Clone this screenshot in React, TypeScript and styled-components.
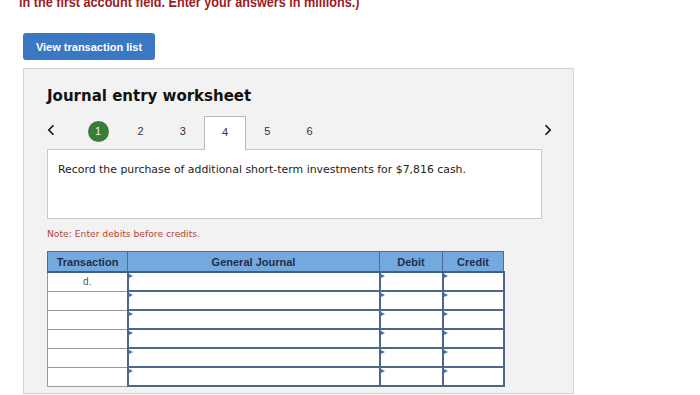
import styled, { createGlobalStyle } from "styled-components";

const GlobalStyle = createGlobalStyle`
  body {
    margin: 0;
    background: #ffffff;
    overflow: hidden;
  }
`;

const Page = styled.div`
  width: 700px;
  height: 395px;
  padding-left: 23px;
  box-sizing: border-box;
  overflow: hidden;
`;

const Instruction = styled.div`
  margin-top: -7px;
  margin-left: -4px;
  height: 17px;
  font-family: "Liberation Sans", Arial, sans-serif;
  font-weight: 700;
  font-size: 15.5px;
  line-height: 17px;
  color: #9b1c1f;
  white-space: nowrap;
  transform: scaleX(0.815);
  transform-origin: left center;
`;

const ViewButton = styled.button`
  display: block;
  margin-top: 23px;
  width: 132px;
  height: 27px;
  padding: 0;
  border: none;
  border-radius: 3px;
  background: #3a78c2;
  color: #ffffff;
  font-family: "Liberation Sans", Arial, sans-serif;
  font-weight: 700;
  font-size: 11px;
  cursor: pointer;
`;

const Panel = styled.div`
  margin-top: 8px;
  width: 551px;
  height: 326px;
  box-sizing: border-box;
  padding: 18px 0 0 23px;
  background: #f2f2f2;
  border: 1px solid #d4d4d4;
`;

const Title = styled.h2`
  margin: 0;
  font-family: "DejaVu Sans", Verdana, sans-serif;
  font-weight: 700;
  font-size: 15px;
  line-height: 18px;
  color: #111111;
`;

const TabRow = styled.div`
  margin-top: 11px;
  width: 505px;
  height: 33px;
  display: flex;
  align-items: stretch;
  position: relative;
  z-index: 1;
`;

const Arrow = styled.span<{ $right?: boolean }>`
  width: 30px;
  display: flex;
  align-items: center;
  justify-content: ${({ $right }) => ($right ? "flex-end" : "flex-start")};
  margin-left: ${({ $right }) => ($right ? "auto" : "0")};
  padding-bottom: 5px;
  box-sizing: border-box;
  color: #111111;
`;

const Tab = styled.div<{ $active?: boolean }>`
  width: 42.3px;
  box-sizing: border-box;
  display: flex;
  align-items: center;
  justify-content: center;
  padding-bottom: 4px;
  font-family: "Liberation Sans", Arial, sans-serif;
  font-size: 11px;
  color: #333333;
  background: ${({ $active }) => ($active ? "#ffffff" : "transparent")};
  border: 1px solid ${({ $active }) => ($active ? "#b8b8b8" : "transparent")};
  border-bottom: none;
  margin-bottom: ${({ $active }) => ($active ? "-1px" : "0")};
`;

const DoneBadge = styled.span`
  width: 21px;
  height: 21px;
  border-radius: 50%;
  background: #3b7d38;
  color: #ffffff;
  font-size: 10px;
  display: flex;
  align-items: center;
  justify-content: center;
`;

const Description = styled.div`
  width: 495px;
  height: 70px;
  box-sizing: border-box;
  padding: 13px 10px;
  background: #ffffff;
  border: 1px solid #c8c8c8;
  font-family: "DejaVu Sans", Verdana, sans-serif;
  font-size: 10.9px;
  color: #222222;
`;

const Note = styled.div`
  margin-top: 9px;
  font-family: "DejaVu Sans", Verdana, sans-serif;
  font-size: 9.2px;
  color: #ad4842;
`;

const Table = styled.table`
  margin-top: 12px;
  width: 452px;
  border-collapse: collapse;
  table-layout: fixed;
  font-family: "Liberation Sans", Arial, sans-serif;
`;

const HeadCell = styled.th<{ $w: number }>`
  width: ${({ $w }) => $w}px;
  height: 19px;
  padding: 0;
  background: #74a9de;
  color: #1e2e4d;
  font-size: 11px;
  font-weight: 700;
  border: 1px solid #4d6b93;
  border-bottom: 2px solid #3e5e8c;
`;

const TxCell = styled.td`
  height: 17px;
  padding: 0;
  background: #ffffff;
  border: 1px solid #9a9a9a;
  text-align: center;
  font-size: 10px;
  color: #555555;
`;

const InputCell = styled.td`
  height: 17px;
  padding: 0;
  background: #ffffff;
  border: 2px solid #4e6688;
  position: relative;

  &::before {
    content: "";
    position: absolute;
    left: 0;
    top: 1px;
    border-top: 2.5px solid transparent;
    border-bottom: 2.5px solid transparent;
    border-left: 4px solid #3f72b5;
  }
`;

const tabs = [1, 2, 3, 4, 5, 6];
const rows = ["d.", "", "", "", "", ""];

function ChevronLeft() {
  return (
    <svg width="8" height="12" viewBox="0 0 8 12">
      <path d="M6.5 1.2 L1.8 6 L6.5 10.8" fill="none" stroke="#111" strokeWidth="1.6" />
    </svg>
  );
}

function ChevronRight() {
  return (
    <svg width="8" height="12" viewBox="0 0 8 12">
      <path d="M1.5 1.2 L6.2 6 L1.5 10.8" fill="none" stroke="#111" strokeWidth="1.6" />
    </svg>
  );
}

export default function App() {
  return (
    <>
      <GlobalStyle />
      <Page>
        <Instruction>in the first account field. Enter your answers in millions.)</Instruction>
        <ViewButton>View transaction list</ViewButton>

        <Panel>
          <Title>Journal entry worksheet</Title>

          <TabRow>
            <Arrow>
              <ChevronLeft />
            </Arrow>
            {tabs.map((n) => (
              <Tab key={n} $active={n === 4}>
                {n === 1 ? <DoneBadge>1</DoneBadge> : n}
              </Tab>
            ))}
            <Arrow $right>
              <ChevronRight />
            </Arrow>
          </TabRow>

          <Description>
            Record the purchase of additional short-term investments for $7,816 cash.
          </Description>

          <Note>Note: Enter debits before credits.</Note>

          <Table>
            <thead>
              <tr>
                <HeadCell $w={79}>Transaction</HeadCell>
                <HeadCell $w={251}>General Journal</HeadCell>
                <HeadCell $w={62}>Debit</HeadCell>
                <HeadCell $w={60}>Credit</HeadCell>
              </tr>
            </thead>
            <tbody>
              {rows.map((r, i) => (
                <tr key={i}>
                  <TxCell>{r}</TxCell>
                  <InputCell />
                  <InputCell />
                  <InputCell />
                </tr>
              ))}
            </tbody>
          </Table>
        </Panel>
      </Page>
    </>
  );
}
